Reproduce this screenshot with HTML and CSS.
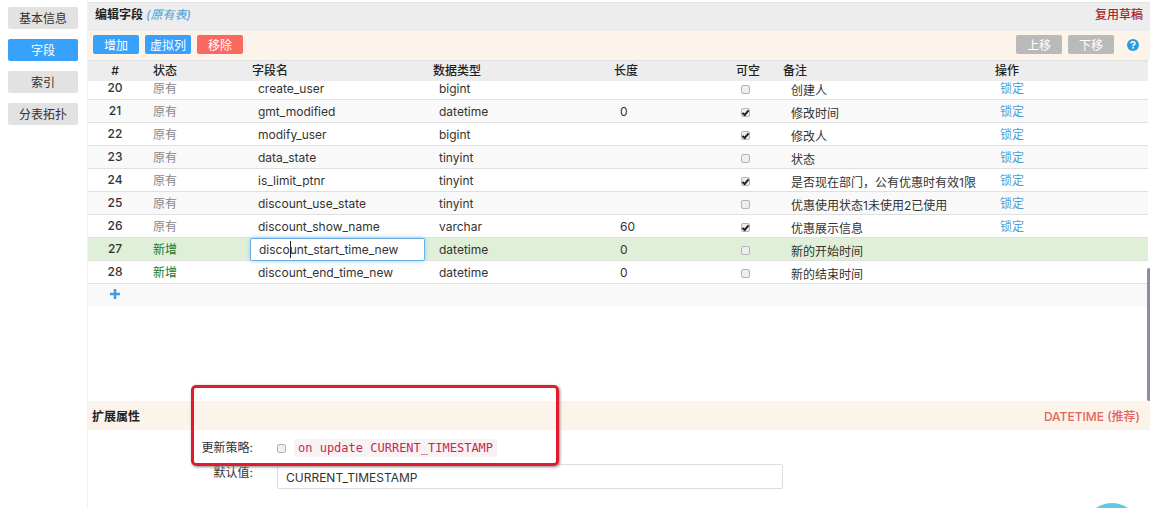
FILE: index.html
```html
<!DOCTYPE html>
<html lang="zh-CN">
<head>
<meta charset="utf-8">
<title>编辑字段</title>
<link rel="stylesheet" href="styles.css">
</head>
<body>
<div class="app">
  <nav class="sidebar">
    <button class="tab">基本信息</button>
    <button class="tab tab-active">字段</button>
    <button class="tab">索引</button>
    <button class="tab">分表拓扑</button>
  </nav>
  <main class="main">
    <header class="title-bar">
      <h1 class="title">编辑字段 <em class="title-note">(原有表)</em></h1>
      <a class="draft" href="#">复用草稿</a>
    </header>
    <div class="toolbar">
      <button class="btn btn-blue">增加</button>
      <button class="btn btn-blue">虚拟列</button>
      <button class="btn btn-red">移除</button>
      <span class="spacer"></span>
      <button class="btn btn-gray">上移</button>
      <button class="btn btn-gray">下移</button>
      <button class="help" aria-label="帮助">
        <svg width="12" height="12" viewBox="0 0 12 12"><circle cx="6" cy="6" r="6" fill="#2b9bdf"/><path d="M4 4.600C4 3.300 4.900 2.700 6 2.700s2 .6 2 1.700C8 5.700 6.100 5.700 6.100 7.300" fill="none" stroke="#fff" stroke-width="1.600"/><rect x="5.300" y="8" width="1.600" height="1.600" fill="#fff"/></svg>
      </button>
    </div>
    <div class="table-pane">
      <table class="fields">
        <thead>
          <tr><th class="num">#</th><th>状态</th><th>字段名</th><th>数据类型</th><th>长度</th><th>可空</th><th>备注</th><th>操作</th></tr>
        </thead>
        <tbody>
          <tr><td class="num">20</td><td class="old">原有</td><td class="val">create_user</td><td class="val">bigint</td><td class="val"></td><td class="check"><input type="checkbox" aria-label="可空"></td><td class="note">创建人</td><td class="act"><a href="#">锁定</a></td></tr>
          <tr><td class="num">21</td><td class="old">原有</td><td class="val">gmt_modified</td><td class="val">datetime</td><td class="val">0</td><td class="check"><input type="checkbox" aria-label="可空" checked></td><td class="note">修改时间</td><td class="act"><a href="#">锁定</a></td></tr>
          <tr><td class="num">22</td><td class="old">原有</td><td class="val">modify_user</td><td class="val">bigint</td><td class="val"></td><td class="check"><input type="checkbox" aria-label="可空" checked></td><td class="note">修改人</td><td class="act"><a href="#">锁定</a></td></tr>
          <tr><td class="num">23</td><td class="old">原有</td><td class="val">data_state</td><td class="val">tinyint</td><td class="val"></td><td class="check"><input type="checkbox" aria-label="可空"></td><td class="note">状态</td><td class="act"><a href="#">锁定</a></td></tr>
          <tr><td class="num">24</td><td class="old">原有</td><td class="val">is_limit_ptnr</td><td class="val">tinyint</td><td class="val"></td><td class="check"><input type="checkbox" aria-label="可空" checked></td><td class="note">是否现在部门，公有优惠时有效1限</td><td class="act"><a href="#">锁定</a></td></tr>
          <tr><td class="num">25</td><td class="old">原有</td><td class="val">discount_use_state</td><td class="val">tinyint</td><td class="val"></td><td class="check"><input type="checkbox" aria-label="可空"></td><td class="note">优惠使用状态1未使用2已使用</td><td class="act"><a href="#">锁定</a></td></tr>
          <tr><td class="num">26</td><td class="old">原有</td><td class="val">discount_show_name</td><td class="val">varchar</td><td class="val">60</td><td class="check"><input type="checkbox" aria-label="可空" checked></td><td class="note">优惠展示信息</td><td class="act"><a href="#">锁定</a></td></tr>
          <tr class="selected"><td class="num">27</td><td class="new">新增</td><td class="edit"><input class="name-input" type="text" aria-label="字段名" value="discount_start_time_new"><span class="caret"></span></td><td class="val">datetime</td><td class="val">0</td><td class="check"><input type="checkbox" aria-label="可空"></td><td class="note">新的开始时间</td><td></td></tr>
          <tr><td class="num">28</td><td class="new">新增</td><td class="val">discount_end_time_new</td><td class="val">datetime</td><td class="val">0</td><td class="check"><input type="checkbox" aria-label="可空"></td><td class="note">新的结束时间</td><td></td></tr>
          <tr class="add-row"><td class="num"><button class="add" aria-label="添加字段"><svg width="10" height="10" viewBox="0 0 10 10"><path d="M5 0v10M0 5h10" stroke="#3b9be6" stroke-width="2.600"/></svg></button></td></tr>
        </tbody>
      </table>
      <div class="scroll-thumb"></div>
    </div>
    <section class="extra">
      <header class="extra-bar">
        <h2 class="title">扩展属性</h2>
        <span class="type-tip">DATETIME (推荐)</span>
      </header>
      <div class="form">
        <label class="form-label" for="policy">更新策略:</label>
        <div class="policy"><input type="checkbox" id="policy"><code class="code">on update CURRENT_TIMESTAMP</code></div>
        <label class="form-label" for="default">默认值:</label>
        <input class="default-input" type="text" id="default" value="CURRENT_TIMESTAMP">
      </div>
      <div class="highlight"></div>
    </section>
  </main>
  <div class="bubble"></div>
</div>
</body>
</html>
```
FILE: styles.css
```css
* { box-sizing: border-box; }
body {
  margin: 0;
  color: #333;
  background: #fff;
  font: 12px/18px Inter, "Noto Sans CJK SC", sans-serif;
}
button, input { font: inherit; color: inherit; }
button { border: 0; padding: 0; }
a { text-decoration: none; }

.app {
  position: relative;
  display: flex;
  height: 100vh;
  overflow: hidden;
}
.sidebar {
  display: flex;
  flex: none;
  flex-direction: column;
  gap: 10px;
  width: 88px;
  padding: 7px 9px 0 8px;
  border-right: 1px solid #f3f3f3;
}
.tab {
  height: 22px;
  padding-top: 2px;
  border-radius: 2px;
  background: #e2e2e2;
}
.tab-active { background: #38a1fb; color: #fff; }

.main {
  display: flex;
  flex: 1;
  flex-direction: column;
  min-width: 0;
  padding-top: 2px;
}
.title-bar {
  display: flex;
  flex: none;
  align-items: center;
  justify-content: space-between;
  height: 29px;
  padding: 0 7px 4px;
  border-top: 1px solid #e4e4e4;
  background: #ededed;
}
.title {
  margin: 0;
  color: #222;
  font-size: 12px;
  font-weight: 600;
}
.title-note { color: #4c9fd8; font-weight: 400; }
.draft { color: #a52a2f; font-weight: 500; }

.toolbar {
  display: flex;
  flex: none;
  align-items: center;
  gap: 6px;
  height: 29px;
  padding: 0 11px 2px 5px;
  background: #fcf3ea;
}
.btn {
  width: 46px;
  height: 19px;
  padding-top: 2px;
  border-radius: 2px;
  color: #fff;
}
.btn-blue { background: #38a1fb; }
.btn-red { background: #fb6a60; }
.btn-gray { background: #bababa; }
.spacer { flex: 1; }
.help {
  display: flex;
  margin-left: 7px;
  background: none;
}

.table-pane {
  position: relative;
  flex: 1;
  min-height: 0;
  overflow: hidden;
  padding-right: 2px;
}
.fields, .fields thead, .fields tbody { display: block; }
.fields tr {
  display: grid;
  grid-template-columns: 54px 99px 181fr 181fr 122fr 47px 212fr 164fr;
  height: 23px;
  border-bottom: 1px solid #e0e0e0;
}
.fields thead {
  position: relative;
  z-index: 1;
}
.fields thead tr {
  height: 21px;
  border-top: 1px solid #e0e0e0;
  border-bottom: 0;
  background: #ededed;
}
.fields tbody { margin-top: -4px; }
.fields tbody tr:nth-child(even) { background: #f9f9f9; }
.fields tbody tr.selected { background: #e0f0d8; }
.fields tbody tr.add-row { height: 22px; border-bottom: 0; }
.fields th, .fields td {
  padding: 1px 0 0 11px;
  line-height: 22px;
  text-align: left;
  white-space: nowrap;
}
.fields th {
  padding-top: 0;
  color: #222;
  font-weight: 500;
  line-height: 20px;
}
.fields .num { padding: 0; text-align: center; font-weight: 500; }
.fields .old { color: #888; }
.fields .new { color: #23782b; }
.fields .val { padding: 1px 0 0 17px; }
.fields .note { padding: 3px 0 0 19px; }
.fields .act { padding-left: 16px; }
.act a { color: #4c9fd8; }
.fields .check {
  display: flex;
  align-items: center;
  padding: 0 0 0 16px;
}
.fields .edit { position: relative; padding: 0 0 0 9px; }
.name-input {
  display: block;
  width: calc(100% + 3px);
  height: 23px;
  padding: 0 8px;
  border: 1px solid #6aafe6;
  border-radius: 2px;
  background: #fff;
  box-shadow: 0 0 5px #9ccdf0;
}
.caret {
  position: absolute;
  top: 3px;
  left: 49px;
  width: 1px;
  height: 17px;
  background: #222;
}
.add {
  display: flex;
  justify-content: center;
  align-items: center;
  width: 100%;
  height: 20px;
  background: none;
}
input[type="checkbox"] {
  display: flex;
  align-items: flex-start;
  justify-content: center;
  appearance: none;
  width: 9px;
  height: 9px;
  margin: 0;
  border: 1px solid #b5b5b5;
  border-radius: 2px;
  background: #eee;
}
input[type="checkbox"]:checked::after {
  content: "";
  flex: none;
  box-sizing: border-box;
  width: 4px;
  height: 7px;
  border: solid #222;
  border-width: 0 2px 2px 0;
  transform: rotate(40deg);
  transform-origin: 50% 40%;
}
.scroll-thumb {
  position: absolute;
  right: 0;
  bottom: 0;
  width: 3px;
  height: 39%;
  border-radius: 2px 0 0 2px;
  background: #8790a3;
}

.extra {
  position: relative;
  flex: none;
  height: 107px;
}
.extra-bar {
  display: flex;
  align-items: center;
  justify-content: space-between;
  height: 29px;
  padding: 3px 10px 0 4px;
  background: #fcf3ea;
}
.type-tip { color: #e2645c; font-weight: 500; }
.form {
  display: grid;
  grid-template-columns: 165px 1fr;
  column-gap: 24px;
  row-gap: 7px;
  padding-top: 9px;
}
.form-label { text-align: right; }
.policy { display: flex; align-items: center; gap: 8px; }
.code {
  padding: 0 4px;
  border-radius: 3px;
  background: #f9f2f4;
  color: #c22a52;
  font: 12px/18px "DejaVu Sans Mono", monospace;
}
.default-input {
  width: 58%;
  height: 25px;
  padding: 1px 8px 0;
  border: 1px solid #ddd;
  border-radius: 2px;
  background: #fff;
}
.highlight {
  position: absolute;
  top: -16px;
  left: 103px;
  width: 368px;
  height: 81px;
  border: 3px solid #e01b2e;
  border-radius: 5px;
  box-shadow: 1px 1px 3px #888;
  pointer-events: none;
}
.bubble {
  position: absolute;
  right: 10px;
  bottom: -51px;
  width: 56px;
  height: 56px;
  border-radius: 50%;
  background: #62c8e2;
}
```
